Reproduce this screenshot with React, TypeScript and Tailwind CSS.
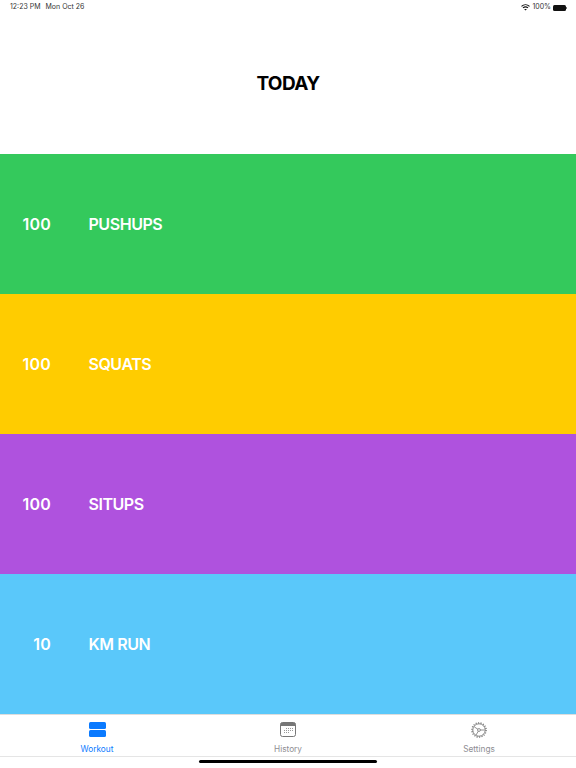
import React from 'react';

const exercises = [
  { count: '100', name: 'PUSHUPS', bg: 'bg-[#34c95c]' },
  { count: '100', name: 'SQUATS', bg: 'bg-[#ffcc00]' },
  { count: '100', name: 'SITUPS', bg: 'bg-[#af52de]' },
  { count: '10', name: 'KM RUN', bg: 'bg-[#5ac8fa]' },
];

const App: React.FC = () => {
  return (
    <div className="w-[576px] h-[768px] bg-white flex flex-col overflow-hidden font-['Inter',sans-serif]">
      {/* Status bar */}
      <div className="h-[14px] pl-[10px] pr-[9px] flex items-center justify-between text-[7px] text-[#333] shrink-0">
        <div className="flex gap-[5px] pt-[1px]">
          <span>12:23 PM</span>
          <span>Mon Oct 26</span>
        </div>
        <div className="flex items-center gap-[2px] pt-[1px]">
          <svg width="9" height="7" viewBox="0 0 9 7" fill="none" stroke="#111" strokeWidth="1.1">
            <path d="M0.5 2.4 C2.8 0.2 6.2 0.2 8.5 2.4" />
            <path d="M2 3.9 C3.4 2.7 5.6 2.7 7 3.9" />
            <path d="M4.5 6.6 L3.2 5.3 C3.9 4.8 5.1 4.8 5.8 5.3 Z" fill="#111" stroke="none" />
          </svg>
          <span>100%</span>
          <div className="flex items-center">
            <div className="w-[13px] h-[6px] bg-[#111] rounded-[1.5px]" />
            <div className="w-[1px] h-[2px] bg-[#777]" />
          </div>
        </div>
      </div>

      {/* Title */}
      <div className="h-[140px] flex items-center justify-center shrink-0">
        <h1 className="text-[19px] tracking-[-0.6px] font-bold text-black leading-[24px] mb-[1px]">TODAY</h1>
      </div>

      {/* Workout rows */}
      {exercises.map((e) => (
        <div key={e.name} className={`h-[140px] shrink-0 flex items-center text-white font-semibold text-[16px] leading-[20px] ${e.bg}`}>
          <div className="w-[51px] text-right tracking-[0.2px]">{e.count}</div>
          <div className="ml-[37.5px] tracking-[-0.45px]">{e.name}</div>
        </div>
      ))}

      {/* Tab bar */}
      <div className="flex-1 relative bg-white border-t border-[#ddd]">
        <div className="h-[41px] grid grid-cols-3">
          <div className="flex flex-col items-center pt-[7px] pl-[2px] text-[#0a7aff]">
            <svg width="17" height="15" viewBox="0 0 17 15" fill="#0a7aff">
              <rect x="0" y="0" width="17" height="7" rx="1.5" />
              <rect x="0" y="8" width="17" height="7" rx="1.5" />
            </svg>
            <span className="text-[8.25px] mt-[6px] leading-[12px]">Workout</span>
          </div>
          <div className="flex flex-col items-center pt-[7px] text-[#8e8e93]">
            <svg width="16" height="15" viewBox="0 0 16 15" fill="none">
              <rect x="0.5" y="0.5" width="15" height="14" rx="2" stroke="#777" />
              <path d="M0.5 4 V2.5 A2 2 0 0 1 2.5 0.5 H13.5 A2 2 0 0 1 15.5 2.5 V4 Z" fill="#777" />
              <g fill="#999">
                <rect x="6" y="6" width="1" height="1" />
                <rect x="8" y="6" width="1" height="1" />
                <rect x="10" y="6" width="1" height="1" />
                <rect x="12" y="6" width="1" height="1" />
                <rect x="4" y="8" width="1" height="1" />
                <rect x="6" y="8" width="1" height="1" />
                <rect x="8" y="8" width="1" height="1" />
                <rect x="10" y="8" width="1" height="1" />
                <rect x="12" y="8" width="1" height="1" />
                <rect x="4" y="10" width="1" height="1" />
                <rect x="6" y="10" width="1" height="1" />
                <rect x="8" y="10" width="1" height="1" />
              </g>
            </svg>
            <span className="text-[8.25px] mt-[6px] leading-[12px]">History</span>
          </div>
          <div className="flex flex-col items-center pt-[7px] pr-[2px] text-[#8e8e93]">
            <svg width="18" height="16" viewBox="0 0 18 18" fill="none" stroke="#777">
              <circle cx="9" cy="9" r="7" strokeWidth="1" />
              <circle cx="9" cy="9" r="8" strokeWidth="1.6" strokeDasharray="1.2 1.6" />
              <path d="M9 9 L3.6 5.4 M9 9 L15.4 9 M9 9 L5.6 14.8" strokeWidth="0.9" />
              <circle cx="9" cy="9" r="1.6" fill="#fff" strokeWidth="0.9" />
            </svg>
            <span className="text-[8.25px] mt-[5px] leading-[12px]">Settings</span>
          </div>
        </div>
        <div className="h-[1px] bg-[#e5e5e5]" />
        {/* Home indicator */}
        <div className="absolute left-[199px] top-[45px] w-[178px] h-[3px] rounded-full bg-black" />
      </div>
    </div>
  );
};

export default App;
